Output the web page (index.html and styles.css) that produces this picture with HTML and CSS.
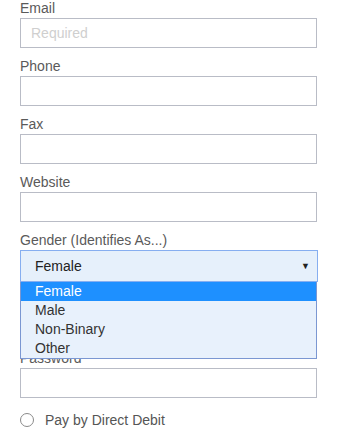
FILE: index.html
```html
<!DOCTYPE html>
<html>
<head>
<meta charset="utf-8">
<link rel="stylesheet" href="styles.css">
</head>
<body>
<form class="form">
  <div class="field">
    <label class="label">Email</label>
    <div class="input"><span class="placeholder">Required</span></div>
  </div>
  <div class="field">
    <label class="label">Phone</label>
    <div class="input"></div>
  </div>
  <div class="field">
    <label class="label">Fax</label>
    <div class="input"></div>
  </div>
  <div class="field">
    <label class="label">Website</label>
    <div class="input"></div>
  </div>
  <div class="field field-gender">
    <label class="label">Gender (Identifies As...)</label>
    <div class="select">
      <span class="select-value">Female</span>
      <span class="arrow">▼</span>
      <ul class="dropdown">
        <li class="option selected">Female</li>
        <li class="option">Male</li>
        <li class="option">Non-Binary</li>
        <li class="option">Other</li>
      </ul>
    </div>
  </div>
  <div class="field">
    <label class="label">Password</label>
    <div class="input"></div>
  </div>
  <div class="radio-row">
    <span class="radio"></span>
    <span class="radio-label">Pay by Direct Debit</span>
  </div>
</form>
</body>
</html>
```
FILE: styles.css
```css
html, body {
  margin: 0;
  padding: 0;
  background: #ffffff;
}
body {
  font-family: "Liberation Sans", Arial, sans-serif;
  font-size: 14px;
  color: #555555;
}
.form {
  width: 297px;
  padding-left: 20px;
}
.field {
  display: flex;
  flex-direction: column;
  margin-bottom: 10px;
}
.field-gender {
  margin-bottom: 68px;
}
.label {
  display: block;
  height: 18px;
  line-height: 17px;
  color: #5a5a5a;
}
.input {
  box-sizing: border-box;
  height: 30px;
  border: 1px solid #b9bcc6;
  background: #fff;
  display: flex;
  align-items: center;
  padding-left: 10px;
}
.placeholder {
  color: #cfcfcf;
}
.select {
  position: relative;
  box-sizing: border-box;
  height: 32px;
  width: 298px;
  border: 1px solid #86aef0;
  background: #e6f0fb;
  display: flex;
  align-items: center;
  padding-left: 14px;
  padding-right: 7px;
  color: #222;
}
.select-value {
  flex: 1;
}
.arrow {
  font-size: 9px;
  color: #222;
}
.dropdown {
  position: absolute;
  left: -1px;
  top: 31px;
  width: 297px;
  box-sizing: border-box;
  margin: 0;
  padding: 0;
  list-style: none;
  background: #e8f1fc;
  border: 1px solid #7b97d2;
  border-top: none;
}
.option {
  height: 19px;
  line-height: 19px;
  padding-left: 14px;
  color: #333;
}
.option.selected {
  background: #1e90ff;
  color: #fff;
}
.radio-row {
  display: flex;
  align-items: center;
  margin-top: 14px;
}
.radio {
  box-sizing: border-box;
  width: 14px;
  height: 14px;
  border: 1px solid #8a8a8a;
  border-radius: 50%;
  margin-right: 11px;
}
.radio-label {
  color: #555;
}
```
